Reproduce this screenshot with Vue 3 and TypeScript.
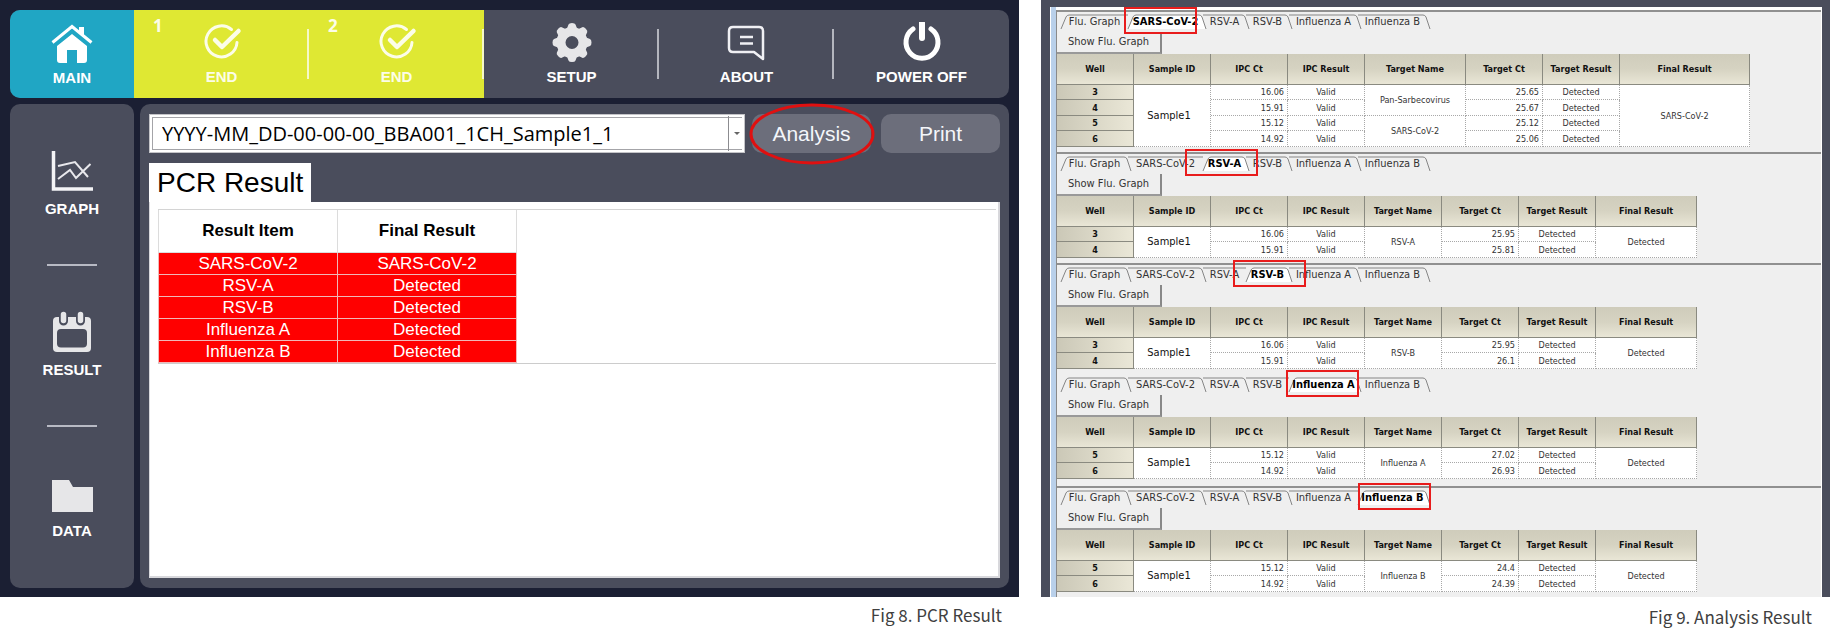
<script setup lang="ts">
import { ref } from 'vue'

interface Tab { label: string; width: number }
interface Row { well: number; ipcCt: string; targetCt: string }
interface Target { name: string; span: number }
interface Section {
  active: number
  markLeft: number
  lined: boolean
  wide: boolean
  final: string
  targets: Target[]
  rows: Row[]
}

const runName = 'YYYY-MM_DD-00-00-00_BBA001_1CH_Sample1_1'
const selectedRun = ref(runName)

const results = [
  { item: 'SARS-CoV-2', result: 'SARS-CoV-2' },
  { item: 'RSV-A', result: 'Detected' },
  { item: 'RSV-B', result: 'Detected' },
  { item: 'Influenza A', result: 'Detected' },
  { item: 'Influenza B', result: 'Detected' },
]

const tabs: Tab[] = [
  { label: 'Flu. Graph', width: 67 },
  { label: 'SARS-CoV-2', width: 75 },
  { label: 'RSV-A', width: 43 },
  { label: 'RSV-B', width: 43 },
  { label: 'Influenza A', width: 69 },
  { label: 'Influenza B', width: 69 },
]

const columns = ['Well', 'Sample ID', 'IPC Ct', 'IPC Result', 'Target Name', 'Target Ct', 'Target Result', 'Final Result']

const sections = ref<Section[]>([
  {
    active: 1, markLeft: 67, lined: true, wide: true, final: 'SARS-CoV-2',
    targets: [{ name: 'Pan-Sarbecovirus', span: 2 }, { name: 'SARS-CoV-2', span: 2 }],
    rows: [
      { well: 3, ipcCt: '16.06', targetCt: '25.65' },
      { well: 4, ipcCt: '15.91', targetCt: '25.67' },
      { well: 5, ipcCt: '15.12', targetCt: '25.12' },
      { well: 6, ipcCt: '14.92', targetCt: '25.06' },
    ],
  },
  {
    active: 2, markLeft: 128, lined: true, wide: false, final: 'Detected',
    targets: [{ name: 'RSV-A', span: 2 }],
    rows: [
      { well: 3, ipcCt: '16.06', targetCt: '25.95' },
      { well: 4, ipcCt: '15.91', targetCt: '25.81' },
    ],
  },
  {
    active: 3, markLeft: 176, lined: true, wide: false, final: 'Detected',
    targets: [{ name: 'RSV-B', span: 2 }],
    rows: [
      { well: 3, ipcCt: '16.06', targetCt: '25.95' },
      { well: 4, ipcCt: '15.91', targetCt: '26.1' },
    ],
  },
  {
    active: 4, markLeft: 229, lined: false, wide: false, final: 'Detected',
    targets: [{ name: 'Influenza A', span: 2 }],
    rows: [
      { well: 5, ipcCt: '15.12', targetCt: '27.02' },
      { well: 6, ipcCt: '14.92', targetCt: '26.93' },
    ],
  },
  {
    active: 5, markLeft: 301, lined: true, wide: false, final: 'Detected',
    targets: [{ name: 'Influenza B', span: 2 }],
    rows: [
      { well: 5, ipcCt: '15.12', targetCt: '24.4' },
      { well: 6, ipcCt: '14.92', targetCt: '24.39' },
    ],
  },
])

// Target cells span pairs of rows, so one starts on every second row.
function targetAt(section: Section, row: number): Target | undefined {
  return row % 2 === 0 ? section.targets[row / 2] : undefined
}

function outline(tab: Tab, index: number, active: number): string {
  const w = tab.width
  const left = index === 0 || index === active ? 'M0 15 L5 3 Q6 1 8 1' : 'M0 1'
  const right = index === active - 1 ? ` H${w}` : ` H${w - 4} Q${w - 2} 1 ${w - 1} 3 L${w + 3} 15`
  return left + right
}
</script>

<template>
  <main class="page">
    <figure class="figure">
      <div class="device">
        <nav class="topbar" aria-label="Main menu">
          <button class="nav main" type="button">
            <svg class="icon" viewBox="0 0 42 42">
              <path d="M1.5 18.5 21 2.5l19.500 16" fill="none" stroke="#fff" stroke-width="3" />
              <path d="M28 3h5v10l-5-4z" fill="#fff" />
              <path d="M21 10 36 22v14q0 3-3 3h-7V26H16v13H9q-3 0-3-3V22z" fill="#fff" />
            </svg>
            <span>MAIN</span>
          </button>
          <button v-for="n in 2" :key="n" class="nav end" type="button">
            <b class="num">{{ n }}</b>
            <svg class="icon" viewBox="0 0 42 42">
              <path d="M30.500 7.500A15.500 15.500 0 1 0 36 20.500" fill="none" stroke="#fcfde8" stroke-width="3" stroke-linecap="round" />
              <path d="M14 18l7 7L37.500 9" fill="none" stroke="#fcfde8" stroke-width="4.500" stroke-linecap="round" stroke-linejoin="round" />
            </svg>
            <span>END</span>
          </button>
          <button class="nav tool" type="button">
            <svg class="icon" viewBox="0 0 42 42">
              <g fill="#e6e6e8">
                <path v-for="a in 8" :key="a" d="M15 9 17.500 2.500Q18 1 21 1t3.500 1.500L27 9z" :transform="`rotate(${a * 45} 21 20.500)`" />
              </g>
              <circle cx="21" cy="20.500" r="11" fill="none" stroke="#e6e6e8" stroke-width="9" />
            </svg>
            <span>SETUP</span>
          </button>
          <button class="nav tool" type="button">
            <svg class="icon" viewBox="0 0 42 42">
              <path d="M7 5h26q4 0 4 4v28l-9-7H7q-4 0-4-4V9q0-4 4-4z" fill="none" stroke="#f0f0f4" stroke-width="2.500" stroke-linejoin="round" />
              <path d="M14 15h13M14 21.500h13" stroke="#f0f0f4" stroke-width="2.500" />
            </svg>
            <span>ABOUT</span>
          </button>
          <button class="nav tool" type="button">
            <svg class="icon" viewBox="0 0 42 42">
              <path d="M12 7A16 16 0 1 0 30 7" fill="none" stroke="#fff" stroke-width="5" stroke-linecap="round" />
              <path d="M21 1v15" stroke="#fff" stroke-width="6" stroke-linecap="round" />
            </svg>
            <span>POWER OFF</span>
          </button>
        </nav>

        <div class="body">
          <nav class="sidebar" aria-label="Views">
            <button class="side" type="button">
              <svg class="icon" viewBox="0 0 42 42">
                <path d="M2.500 1v38H42" fill="none" stroke="#f4f4f6" stroke-width="3.500" />
                <path d="M7 16 24 12 37 27M7 29 19 20l6 8L39.500 14" fill="none" stroke="#e8e8ec" stroke-width="2" />
              </svg>
              <span>GRAPH</span>
            </button>
            <hr />
            <button class="side" type="button">
              <svg class="icon" viewBox="0 0 42 42">
                <rect x="2" y="6" width="38" height="35" rx="4" fill="#e6e6e8" />
                <rect x="6" y="18" width="30" height="18.500" rx="4" fill="#4a4d5c" />
                <path d="M12.500 4v6M29.500 4v6" stroke="#4a4d5c" stroke-width="9" stroke-linecap="round" />
                <path d="M12.500 3.500v6M29.500 3.500v6" stroke="#e6e6e8" stroke-width="5.500" stroke-linecap="round" />
              </svg>
              <span>RESULT</span>
            </button>
            <hr />
            <button class="side" type="button">
              <svg class="icon" viewBox="0 0 42 42">
                <path d="M1 8h17l4 7h20v25H1z" fill="#e6e6e8" />
              </svg>
              <span>DATA</span>
            </button>
          </nav>

          <section class="content">
            <div class="controls">
              <div class="combo">
                <select v-model="selectedRun" aria-label="Run">
                  <option :value="runName">{{ runName }}</option>
                </select>
                <i class="arrow"></i>
              </div>
              <div class="marked">
                <button class="action" type="button">Analysis</button>
                <svg class="ring" viewBox="0 0 127 62" aria-hidden="true">
                  <ellipse cx="63" cy="31" rx="61" ry="29" fill="none" stroke="#e01010" stroke-width="3" />
                </svg>
              </div>
              <button class="action" type="button">Print</button>
            </div>
            <h1 class="sheet-tab">PCR Result</h1>
            <div class="sheet">
              <div class="result-area">
                <table class="results">
                  <thead>
                    <tr><th scope="col">Result Item</th><th scope="col">Final Result</th></tr>
                  </thead>
                  <tbody>
                    <tr v-for="r in results" :key="r.item">
                      <td>{{ r.item }}</td><td>{{ r.result }}</td>
                    </tr>
                  </tbody>
                </table>
              </div>
            </div>
          </section>
        </div>
      </div>
      <figcaption class="cap-left">Fig 8. PCR Result</figcaption>
    </figure>

    <figure class="figure">
      <div class="window">
        <div class="frame">
          <section v-for="(s, si) in sections" :key="si" class="block" :class="{ lined: s.lined }">
            <div class="tabs">
              <button
                v-for="(t, ti) in tabs" :key="t.label" type="button"
                class="tab" :class="{ active: ti === s.active }"
                :style="{ width: t.width + 'px' }"
              >
                <svg class="edge" :width="t.width" height="16" aria-hidden="true">
                  <path :d="outline(t, ti, s.active)" :fill="ti === s.active ? '#fff' : 'none'" stroke="#858585" />
                </svg>
                <span>{{ t.label }}</span>
              </button>
            </div>
            <button class="show" type="button">Show Flu. Graph</button>
            <table class="data" :class="{ wide: s.wide }">
              <colgroup><col v-for="c in columns" :key="c" /></colgroup>
              <thead>
                <tr><th v-for="c in columns" :key="c" scope="col">{{ c }}</th></tr>
              </thead>
              <tbody>
                <tr v-for="(r, ri) in s.rows" :key="r.well">
                  <th scope="row">{{ r.well }}</th>
                  <td v-if="ri === 0" class="sample" :rowspan="s.rows.length">Sample1</td>
                  <td class="number">{{ r.ipcCt }}</td>
                  <td>Valid</td>
                  <td v-if="targetAt(s, ri)" :rowspan="targetAt(s, ri)?.span">{{ targetAt(s, ri)?.name }}</td>
                  <td class="number">{{ r.targetCt }}</td>
                  <td>Detected</td>
                  <td v-if="ri === 0" :rowspan="s.rows.length">{{ s.final }}</td>
                </tr>
              </tbody>
            </table>
            <i class="mark" :style="{ left: s.markLeft + 'px' }"></i>
          </section>
        </div>
      </div>
      <figcaption class="cap-right">Fig 9. Analysis Result</figcaption>
    </figure>
  </main>
</template>

<style>
body {
  margin: 0;
  background: #fff;
}
</style>

<style scoped>
* {
  box-sizing: border-box;
}

.page {
  display: grid;
  grid-template-columns: 1019fr 789fr;
  column-gap: 22px;
  font-family: "Liberation Sans", Arial, sans-serif;
}

.figure {
  margin: 0;
  display: flex;
  flex-direction: column;
  min-width: 0;
}

button {
  font: inherit;
  border: 0;
  padding: 0;
  background: none;
}

figcaption {
  font: 17px/24px "Noto Sans CJK KR", sans-serif;
  color: #404040;
  text-align: right;
}

.cap-left {
  padding: 6px 17px 0 0;
}

.cap-right {
  padding: 8px 18px 0 0;
}

.device {
  display: flex;
  flex-direction: column;
  gap: 6px;
  min-height: 597px;
  padding: 10px 10px 9px;
  background: #1b1f33;
}

.topbar {
  display: flex;
  height: 88px;
  border-radius: 10px;
  overflow: hidden;
  background: #4a4d5c;
}

.nav {
  position: relative;
  display: flex;
  flex-direction: column;
  align-items: center;
  padding-top: 12px;
  gap: 3px;
  color: #fff;
  font-weight: bold;
  font-size: 15px;
  line-height: 20px;
}

.icon {
  width: 42px;
  height: 42px;
}

.main {
  flex: 124 1 0;
  padding-top: 14px;
  gap: 2px;
  background: #20a6c4;
}

.end {
  flex: 175 1 0;
  background: #dfe833;
  color: #fcfde8;
}

.tool {
  flex: 175 1 0;
}

.num {
  position: absolute;
  left: 19px;
  top: 6px;
  font: bold 17px/20px "Open Sans", sans-serif;
}

.end::after,
.tool:not(:last-child)::after {
  content: "";
  position: absolute;
  right: 0;
  top: 19px;
  width: 2px;
  height: 50px;
  background: #b4b6be;
}

.end::after {
  background: #f6f8c8;
}

.body {
  flex: 1;
  display: flex;
  gap: 6px;
}

.sidebar {
  width: 124px;
  display: flex;
  flex-direction: column;
  align-items: center;
  padding-top: 46px;
  border-radius: 10px;
  background: #4a4d5c;
}

.side {
  display: flex;
  flex-direction: column;
  align-items: center;
  gap: 7px;
  color: #fff;
  font-weight: bold;
  font-size: 15px;
  line-height: 20px;
}

.sidebar hr {
  width: 50px;
  height: 2px;
  margin: 45px 0;
  border: 0;
  background: #b8bac4;
}

.content {
  flex: 1;
  min-width: 0;
  display: flex;
  flex-direction: column;
  padding: 10px 9px 10px;
  border-radius: 10px;
  background: #4a4d5c;
}

.controls {
  display: flex;
  height: 39px;
  margin-bottom: 10px;
}

.combo {
  position: relative;
  flex: 1;
  margin-right: 7px;
  padding: 2px;
  background: #fff;
  border: 1px solid #c4c4c8;
}

.combo select {
  appearance: none;
  width: 100%;
  height: 100%;
  padding: 0 0 0 9px;
  border: 1px solid #a4a4a8;
  border-right: 0;
  background: #fff;
  color: #000;
  font: 20px/30px "Open Sans", "Noto Sans CJK KR", sans-serif;
}

.combo::after {
  content: "";
  position: absolute;
  right: 15px;
  top: 1px;
  bottom: 1px;
  width: 1px;
  background: #8c8c90;
}

.arrow {
  position: absolute;
  right: 4px;
  top: 17px;
  border: 3px solid transparent;
  border-top-color: #666;
}

.action {
  width: 119px;
  height: 39px;
  border-radius: 10px;
  background: #6c6e7b;
  color: #f4f6fa;
  font-size: 21px;
}

.marked {
  position: relative;
  margin-right: 10px;
}

.ring {
  position: absolute;
  left: -3px;
  top: -11px;
  width: 127px;
  height: 62px;
}

.sheet-tab {
  align-self: flex-start;
  height: 39px;
  margin: 0;
  padding: 0 8px;
  background: #fff;
  font-size: 28px;
  font-weight: normal;
  line-height: 40px;
}

.sheet {
  flex: 1;
  padding: 7px 2px 0 8px;
  background: #fff;
  border: 1px solid #d8d8dc;
  border-width: 0 2px 2px 1px;
}

.result-area {
  border-top: 1px solid #d4d4d4;
  border-bottom: 1px solid #ccc;
}

.results {
  border-collapse: collapse;
  table-layout: fixed;
  width: 359px;
  font-size: 17px;
  line-height: 20px;
  text-align: center;
}

.results th {
  height: 42px;
  padding: 0;
  border: 1px solid #dcdcdc;
  border-top: 0;
}

.results td {
  height: 22px;
  padding: 1px 0 0;
  border: 1px solid #f0b8b8;
  background: #f00;
  color: #fff;
}

.window {
  display: flex;
  min-height: 597px;
  padding: 7px 8px 0 10px;
  background: #4a4d5c;
}

.frame {
  flex: 1;
  min-width: 0;
  padding: 3px 0 0 1px;
  border-left: 5px solid #b9d0ea;
  border-right: 1px solid #fff;
  background: #efefef;
  box-shadow: inset 0 3px #fff, inset 1px 0 #8a8a8a, -1px 0 #fff;
  font-family: "DejaVu Sans Condensed", "DejaVu Sans", sans-serif;
}

.block {
  position: relative;
  border-top: 1px solid transparent;
  padding: 2px 0 7px;
}

.block.lined {
  border-top: 2px solid #909090;
  padding-bottom: 5px;
}

.block:last-child {
  padding-bottom: 4px;
}

.tabs {
  display: flex;
  height: 16px;
  padding-left: 4px;
  margin-bottom: 2px;
}

.tab {
  position: relative;
  height: 16px;
  color: #333;
  font-size: 11px;
  line-height: 16px;
  white-space: nowrap;
  display: flex;
  justify-content: center;
}

.tab span {
  position: relative;
}

.tab.active {
  color: #000;
  font-weight: bold;
}

.edge {
  position: absolute;
  left: 0;
  top: 0;
  overflow: visible;
}

.show {
  display: block;
  width: 105px;
  height: 22px;
  border-right: 2px solid #888;
  border-bottom: 2px solid #999;
  color: #333;
  font-size: 11px;
  line-height: 20px;
}

.data {
  border-collapse: separate;
  border-spacing: 0;
  table-layout: fixed;
  width: 640px;
  font-size: 9px;
  line-height: 12px;
  color: #333;
  text-align: center;
  background: #fff;
}

.data.wide {
  width: 693px;
}

.data col {
  width: 77px;
}

.data col:last-child {
  width: 101px;
}

.data.wide col:nth-child(5) {
  width: 101px;
}

.data.wide col:last-child {
  width: 130px;
}

.data th,
.data td {
  padding: 0;
  border: 0 dotted #a8a8a8;
  border-width: 0 1px 1px 0;
}

.data th {
  color: #111;
}

.data thead th {
  height: 31px;
  border-style: solid;
  border-color: #8a8a80;
  background: linear-gradient(#cfccbb, #d6d3c2 50%, #e9e6d6);
}

.data tbody th {
  border-style: solid;
  border-color: #8a8a80;
  background: linear-gradient(90deg, #cbc8b7, #eae7d7);
}

.data tbody tr:nth-child(odd) {
  height: 15px;
}

.data tbody tr:nth-child(even) {
  height: 16px;
}

.data .number {
  padding-right: 3px;
  text-align: right;
}

.data .sample {
  padding-right: 6px;
  font-size: 11px;
  color: #111;
}

.mark {
  position: absolute;
  top: -5px;
  width: 73px;
  height: 27px;
  border: 2px solid #e81c1c;
}
</style>
